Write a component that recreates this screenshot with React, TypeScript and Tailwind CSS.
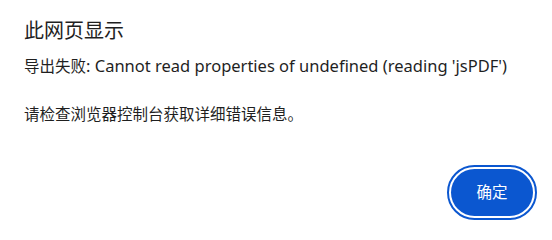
export default function App() {
  return (
    <div className="w-[552px] h-[234px] bg-white text-[#1f1f1f] font-['Noto_Sans','Noto_Sans_CJK_SC',sans-serif] flex flex-col px-6 pt-[17px]">
      <h1 className="text-[20px] leading-[28px] font-normal">此网页显示</h1>
      <p className="mt-[10px] text-[16.5px] leading-[22px] whitespace-nowrap">
        <span className="text-[15.5px]">导出失败</span>: Cannot read properties of undefined (reading 'jsPDF')
      </p>
      <p className="mt-[26px] text-[15.5px] leading-[22px]">请检查浏览器控制台获取详细错误信息。</p>
      <div className="mt-auto mb-[14px] flex justify-end">
        <button className="-mr-[9px] w-[90px] h-[55px] rounded-full border-2 border-[#0b57d0] p-[2px] bg-white">
          <span className="flex h-full w-full items-center justify-center rounded-full bg-[#0b57d0] text-white text-[15.5px]">确定</span>
        </button>
      </div>
    </div>
  );
}
